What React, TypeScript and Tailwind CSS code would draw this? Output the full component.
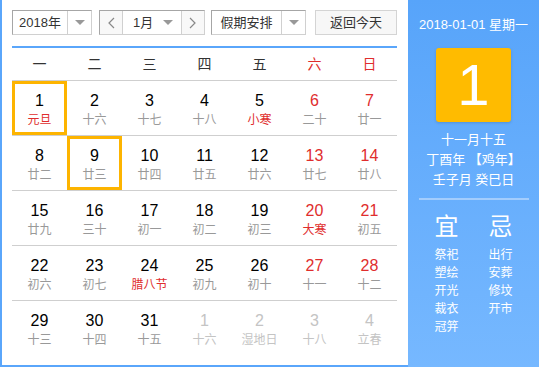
import React from 'react';

type Day = { d: number; l: string; hl?: boolean; other?: boolean };

const rows: Day[][] = [
  [
    { d: 1, l: '元旦', hl: true },
    { d: 2, l: '十六' },
    { d: 3, l: '十七' },
    { d: 4, l: '十八' },
    { d: 5, l: '小寒', hl: true },
    { d: 6, l: '二十' },
    { d: 7, l: '廿一' },
  ],
  [
    { d: 8, l: '廿二' },
    { d: 9, l: '廿三' },
    { d: 10, l: '廿四' },
    { d: 11, l: '廿五' },
    { d: 12, l: '廿六' },
    { d: 13, l: '廿七' },
    { d: 14, l: '廿八' },
  ],
  [
    { d: 15, l: '廿九' },
    { d: 16, l: '三十' },
    { d: 17, l: '初一' },
    { d: 18, l: '初二' },
    { d: 19, l: '初三' },
    { d: 20, l: '大寒', hl: true },
    { d: 21, l: '初五' },
  ],
  [
    { d: 22, l: '初六' },
    { d: 23, l: '初七' },
    { d: 24, l: '腊八节', hl: true },
    { d: 25, l: '初九' },
    { d: 26, l: '初十' },
    { d: 27, l: '十一' },
    { d: 28, l: '十二' },
  ],
  [
    { d: 29, l: '十三' },
    { d: 30, l: '十四' },
    { d: 31, l: '十五' },
    { d: 1, l: '十六', other: true },
    { d: 2, l: '湿地日', other: true },
    { d: 3, l: '十八', other: true },
    { d: 4, l: '立春', other: true },
  ],
];

const weekdays = ['一', '二', '三', '四', '五', '六', '日'];
const yi = ['祭祀', '塑绘', '开光', '裁衣', '冠笄'];
const ji = ['出行', '安葬', '修坟', '开市'];

const font = { fontFamily: '"Liberation Sans", Arial, "Noto Sans CJK SC", sans-serif' };

function Caret() {
  return (
    <span className="block w-0 h-0 border-l-[5px] border-r-[5px] border-t-[5px] border-l-transparent border-r-transparent border-t-[#999]" />
  );
}

function Chevron({ left }: { left?: boolean }) {
  return (
    <svg width="8" height="12" viewBox="0 0 8 12">
      <path
        d={left ? 'M7 1 L2 6 L7 11' : 'M1 1 L6 6 L1 11'}
        fill="none"
        stroke="#888"
        strokeWidth="1.2"
      />
    </svg>
  );
}

export default function App() {
  return (
    <div className="w-[539px] h-[367px] flex bg-white" style={font}>
      <div className="w-[408px] h-full border-l-2 border-b-2 border-[#5aa6fb] pl-[10px] pr-[11px] pt-[10px]">
        <div className="flex items-center h-[25px] text-[13px] text-[#333]">
          <div className="flex h-full w-[80px] border border-[#a6a6a6] border-r-[#d0d0d0] border-b-[#d0d0d0]">
            <div className="flex-1 flex items-center justify-center">2018年</div>
            <div className="w-[24px] border-l border-[#d0d0d0] flex items-center justify-center">
              <Caret />
            </div>
          </div>
          <div className="flex h-full w-[106px] ml-[7px] border border-[#a6a6a6] border-r-[#d0d0d0] border-b-[#d0d0d0]">
            <div className="w-[22px] flex items-center justify-center bg-[#f8f8f8]">
              <Chevron left />
            </div>
            <div className="flex-1 flex items-center border-l border-r border-[#d0d0d0] pl-[10px] pr-[8px]">
              <span className="flex-1">1月</span>
              <Caret />
            </div>
            <div className="w-[22px] flex items-center justify-center bg-[#f8f8f8]">
              <Chevron />
            </div>
          </div>
          <div className="flex h-full w-[95px] ml-[6px] border border-[#a6a6a6] border-r-[#d0d0d0] border-b-[#d0d0d0]">
            <div className="flex-1 flex items-center justify-center">假期安排</div>
            <div className="w-[24px] border-l border-[#d0d0d0] flex items-center justify-center">
              <Caret />
            </div>
          </div>
          <div className="h-full w-[82px] ml-[9px] border border-[#d4d4d4] bg-[#f7f7f7] flex items-center justify-center">
            返回今天
          </div>
        </div>

        <div className="mt-[11px] border-t-2 border-[#5aa6fb]">
          <div className="grid grid-cols-7 h-[33px] border-b-[1.5px] border-[#cfcfcf] text-[14px]">
            {weekdays.map((w, i) => (
              <div
                key={w}
                className={`flex items-center justify-center ${i >= 5 ? 'text-[#e02d2d]' : 'text-[#333]'}`}
              >
                {w}
              </div>
            ))}
          </div>
          {rows.map((row, ri) => (
            <div
              key={ri}
              className={`grid grid-cols-7 h-[55px] ${ri < rows.length - 1 ? 'border-b-[1.5px] border-[#cfcfcf]' : ''}`}
            >
              {row.map((c, ci) => {
                const boxed = (ri === 0 && ci === 0) || (ri === 1 && ci === 1);
                const numColor = c.other
                  ? 'text-[#c4c4c4]'
                  : ci >= 5
                  ? 'text-[#e02d2d]'
                  : 'text-[#000]';
                const lunColor = c.other
                  ? 'text-[#c4c4c4]'
                  : c.hl
                  ? 'text-[#e02d2d]'
                  : 'text-[#999]';
                return (
                  <div
                    key={ci}
                    className={`flex flex-col items-center ${boxed ? 'border-[3px] border-[#fdb400] pt-[7px] h-[54px]' : 'pt-[10px]'}`}
                  >
                    <span className={`text-[16px] leading-[20px] ${numColor}`}>{c.d}</span>
                    <span className={`text-[12px] leading-[16px] mt-[1px] ${lunColor}`}>{c.l}</span>
                  </div>
                );
              })}
            </div>
          ))}
        </div>
      </div>

      <div className="flex-1 h-full bg-gradient-to-b from-[#57a4fa] to-[#76b8ff] text-white flex flex-col items-center">
        <div className="mt-[16px] text-[13px] leading-[18px]">2018-01-01 星期一</div>
        <div className="mt-[14px] w-[75px] h-[74px] rounded-[3px] bg-[#ffbb00] shadow-[0_1px_3px_rgba(0,0,0,0.15)] flex items-center justify-center text-[58px] font-light leading-none">
          1
        </div>
        <div className="mt-[8px] text-[13px] leading-[20px] text-center">
          <div>十一月十五</div>
          <div>丁酉年 【鸡年】</div>
          <div>壬子月 癸巳日</div>
        </div>
        <div className="mt-[8px] w-[110px] h-[2px] bg-[#a3cdfd]" />
        <div className="mt-[14px] flex gap-[30px]">
          <div className="flex flex-col items-center w-[24px]">
            <div className="text-[24px] leading-[26px]">宜</div>
            <div className="mt-[6px] text-[12px] leading-[18px] flex flex-col">
              {yi.map((t) => (
                <span key={t}>{t}</span>
              ))}
            </div>
          </div>
          <div className="flex flex-col items-center w-[24px]">
            <div className="text-[24px] leading-[26px]">忌</div>
            <div className="mt-[6px] text-[12px] leading-[18px] flex flex-col">
              {ji.map((t) => (
                <span key={t}>{t}</span>
              ))}
            </div>
          </div>
        </div>
      </div>
    </div>
  );
}
